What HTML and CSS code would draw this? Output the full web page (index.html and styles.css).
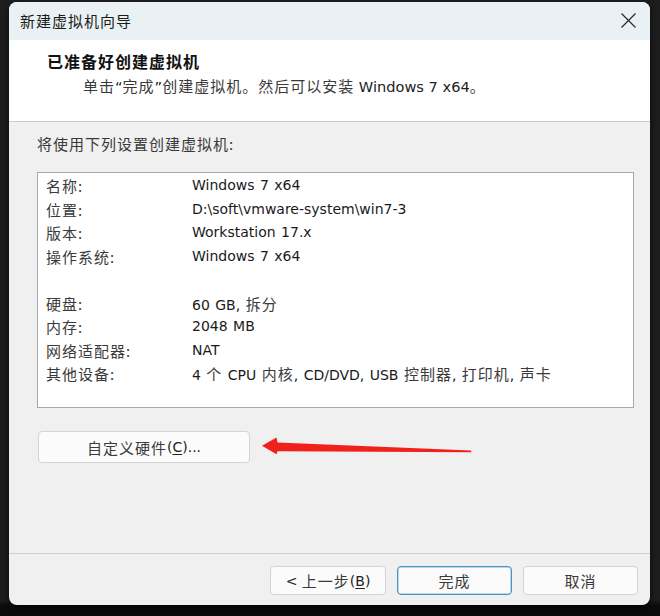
FILE: index.html
```html
<!DOCTYPE html>
<html lang="zh">
<head>
<meta charset="utf-8">
<title>新建虚拟机向导</title>
<link rel="stylesheet" href="styles.css">
</head>
<body>
<div class="desk">
  <div class="window">
    <div class="titlebar">
      <span class="title">新建虚拟机向导</span>
      <svg class="close" width="17" height="17" viewBox="0 0 17 17"><path d="M1.5 1.5 L15.5 15.5 M15.5 1.5 L1.5 15.5" stroke="#2b2b2b" stroke-width="1.25" fill="none"/></svg>
    </div>
    <div class="header">
      <div class="heading">已准备好创建虚拟机</div>
      <div class="sub"><span class="zh">单击</span>“<span class="zh">完成</span>”<span class="zh">创建虚拟机。然后可以安装</span> Windows 7 x64<span class="zh">。</span></div>
    </div>
    <div class="body">
      <div class="intro zh">将使用下列设置创建虚拟机:</div>
      <div class="list">
        <div class="row"><span class="k zh">名称:</span><span class="v">Windows 7 x64</span></div>
        <div class="row"><span class="k zh">位置:</span><span class="v">D:\soft\vmware-system\win7-3</span></div>
        <div class="row"><span class="k zh">版本:</span><span class="v">Workstation 17.x</span></div>
        <div class="row"><span class="k zh">操作系统:</span><span class="v">Windows 7 x64</span></div>
        <div class="row"></div>
        <div class="row"><span class="k zh">硬盘:</span><span class="v">60 GB, <span class="zh">拆分</span></span></div>
        <div class="row"><span class="k zh">内存:</span><span class="v">2048 MB</span></div>
        <div class="row"><span class="k zh">网络适配器:</span><span class="v">NAT</span></div>
        <div class="row"><span class="k zh">其他设备:</span><span class="v">4 <span class="zh">个</span> CPU <span class="zh">内核</span>, CD/DVD, USB <span class="zh">控制器</span>, <span class="zh">打印机</span>, <span class="zh">声卡</span></span></div>
      </div>
      <div class="custom-row">
        <button class="btn custom"><span class="zh">自定义硬件</span>(<u>C</u>)...</button>
        <svg class="arrow" width="225" height="40" viewBox="0 0 225 40"><path d="M7 20.7 L21.5 12.6 L22.5 17.6 L216 25.6 L216.5 27.2 L22.5 26.2 L21.5 29.3 Z" fill="#f0211b"/></svg>
      </div>
    </div>
    <div class="footer">
      <button class="btn wide"><span>&lt;&nbsp;</span><span class="zh">上一步</span>(<u>B</u>)</button>
      <button class="btn primary"><span class="zh">完成</span></button>
      <button class="btn"><span class="zh">取消</span></button>
    </div>
  </div>
</div>
</body>
</html>
```

FILE: styles.css
```css
* { box-sizing: border-box; }
html, body { margin: 0; padding: 0; }
body {
  background: #1d1d1d;
  width: 660px;
  height: 616px;
  overflow: hidden;
  font-family: "DejaVu Sans", "Noto Sans CJK SC", sans-serif;
  font-size: 14px;
  color: #1a1a1a;
}
.desk {
  padding: 2px 0 0 9px;
  height: 616px;
  background: linear-gradient(#1d1d1d 0, #1d1d1d 600px, #0b0b0b 606px);
}
.zh {
  font-family: "Noto Sans CJK SC", sans-serif;
  font-size: 15px;
  letter-spacing: 1px;
  color: #3a3a3a;
}
.window {
  width: 641px;
  height: 603px;
  border-radius: 8px;
  overflow: hidden;
  background: #f0f0f0;
  display: flex;
  flex-direction: column;
  box-shadow: 0 3px 6px rgba(0, 0, 0, 0.7);
}
.titlebar {
  height: 38px;
  flex: none;
  background: #e9f1f4;
  display: flex;
  align-items: center;
  justify-content: space-between;
  padding: 0 13px 1px 11px;
}
.title {
  font-family: "Noto Sans CJK SC", sans-serif;
  font-size: 15px;
  letter-spacing: 1px;
  color: #1b1b1b;
}
.close { display: block; }
.header {
  height: 82px;
  flex: none;
  background: #ffffff;
  border-bottom: 1px solid #cbcbcb;
  padding: 10px 0 0 38px;
}
.heading {
  font-family: "Noto Sans CJK SC", sans-serif;
  font-weight: 700;
  font-size: 16px;
  letter-spacing: 1px;
  line-height: 22px;
  color: #111;
}
.sub {
  margin: 3px 0 0 36px;
  line-height: 22px;
  color: #222;
  font-size: 14.6px;
}
.body {
  flex: 1;
  padding: 11px 16px 0 28px;
}
.intro {
  line-height: 22px;
  margin-bottom: 17px;
}
.list {
  height: 236px;
  background: #ffffff;
  border: 1px solid #a8a8a8;
  padding: 1px 0 0 8px;
}
.row {
  display: flex;
  height: 23.5px;
  line-height: 23.5px;
  white-space: nowrap;
}
.k { width: 146px; flex: none; }
.v { color: #1a1a1a; word-spacing: 1px; }
.custom-row {
  position: relative;
  margin-top: 23px;
  padding-left: 1px;
}
.btn {
  font-family: "DejaVu Sans", "Noto Sans CJK SC", sans-serif;
  font-size: 14px;
  color: #222;
  background: #fbfbfb;
  border: 1px solid #d3d3d3;
  border-radius: 4px;
  height: 29px;
  width: 115px;
  padding: 0;
  display: flex;
  align-items: center;
  justify-content: center;
}
.btn u { text-underline-offset: 2px; }
.custom {
  width: 212px;
  height: 32px;
}
.arrow {
  position: absolute;
  left: 218px;
  top: -6px;
}
.footer {
  height: 52px;
  flex: none;
  border-top: 1px solid #cfcfcf;
  display: flex;
  justify-content: flex-end;
  gap: 11px;
  padding: 12px 12px 0 0;
}
.wide { width: 116px; }
.primary {
  border: 1px solid #4a93c3;
  box-shadow: inset 0 0 0 0.5px #7fb3d6;
}
```
